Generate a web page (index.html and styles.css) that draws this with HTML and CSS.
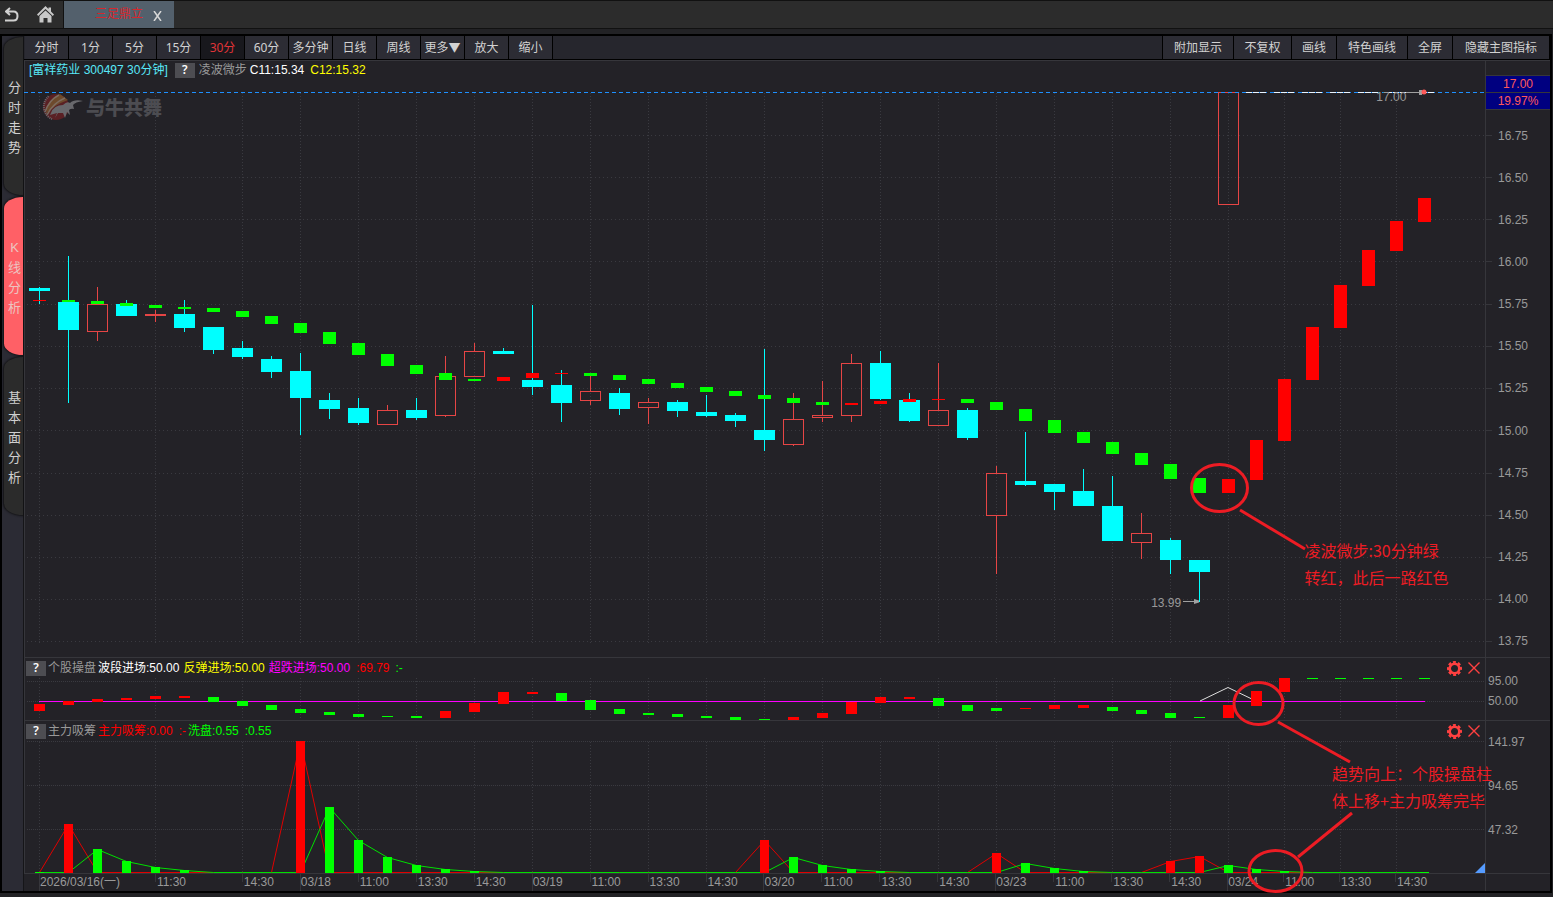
FILE: index.html
```html
<!DOCTYPE html>
<html lang="zh-CN">
<head>
<meta charset="utf-8">
<title>富祥药业 300497</title>
<link rel="stylesheet" href="styles.css">
</head>
<body>
<header class="topbar">
  <button class="nav-btn" aria-label="返回"><svg width="14" height="16" viewBox="0 0 14 16"><path d="M5 1 1 4.500 5 8M1.500 4.500H8.500Q12.500 4.500 12.500 9T8.500 13.500H0" fill="none" stroke="#d0d0d0" stroke-width="2"/></svg></button>
  <button class="nav-btn" aria-label="首页"><svg width="17" height="17" viewBox="0 0 17 17"><path d="M8.500 0 11.500 3V1.500H14V5.500L17 8.500 15.800 10 8.500 3 1.200 10 0 8.500Z" fill="#c8c8c8"/><path d="M8.500 4.500 14.500 10V16.500H10.500V12H6.500V16.500H2.500V10Z" fill="#c8c8c8"/></svg></button>
  <div class="doc-tab"><span class="doc-name">三足鼎立</span><button class="doc-close" aria-label="关闭标签"><svg width="9" height="10" viewBox="0 0 9 10"><path d="M1 0 8 10M8 0 1 10" stroke="#d8d8d8" stroke-width="1.500"/></svg></button></div>
</header>
<div class="app">
  <nav class="side">
    <button class="side-tab"><span>分时走势</span></button>
    <button class="side-tab active"><span>K线分析</span></button>
    <button class="side-tab"><span>基本面分析</span></button>
  </nav>
  <main class="work">
    <div class="toolbar">
      <button>分时</button><button>1分</button><button>5分</button><button>15分</button><button class="on">30分</button><button>60分</button><button>多分钟</button><button>日线</button><button>周线</button><button>更多▼</button><button>放大</button><button>缩小</button>
      <span class="fill"></span>
      <button class="w71 first">附加显示</button><button class="w58">不复权</button><button class="w45">画线</button><button class="w71">特色画线</button><button class="w45">全屏</button><button class="w97">隐藏主图指标</button>
    </div>
    <section class="pane main-pane">
      <div class="plot">
        <svg id="price" class="chart" viewBox="24 60 1462 597" preserveAspectRatio="none"></svg>
        <div class="info"><span class="cyan">[富祥药业 300497 30分钟]</span><button class="help">?</button><span class="dim">凌波微步</span><span class="white">C11:15.34</span><span class="yellow">C12:15.32</span></div>
        <div class="watermark"><svg width="42" height="30" viewBox="0 0 42 30"><circle cx="15" cy="15" r="13" fill="#5a2024"/><path d="M5 22Q6 7 19 2L27 8Q13 13 5 22Z" fill="#6d4a2c"/><path d="M4 20Q8 8 18 3M6 23Q12 11 24 6" stroke="#7d6c60" stroke-width="1.500" fill="none"/><path d="M10 21Q13 13 22 13Q26 9 29 11Q33 7 42 9Q34 10 32 13L33 17Q30 16 28 18L29 23L26 20L24 26L22 21L17 21L14 26L16 21L9 23Z" fill="#68686c"/><path d="M11 27A13.500 13.500 0 0 1 8 4" fill="none" stroke="#66666b" stroke-width="2" stroke-dasharray="1 1"/></svg><span>与牛共舞</span></div>
        <span class="mark low">13.99</span><span class="mark high">17.00</span>
      </div>
      <div class="axis">
        <div class="quote">17.00</div><div class="quote">19.97%</div>
        <div class="prices"><span>16.75</span><span>16.50</span><span>16.25</span><span>16.00</span><span>15.75</span><span>15.50</span><span>15.25</span><span>15.00</span><span>14.75</span><span>14.50</span><span>14.25</span><span>14.00</span><span>13.75</span></div>
      </div>
    </section>
    <section class="pane trade-pane">
      <div class="plot">
        <svg id="trade" class="chart" viewBox="24 658 1462 62" preserveAspectRatio="none"></svg>
        <div class="info sub"><button class="help">?</button><span class="dim">个股操盘</span><span class="white">波段进场:50.00</span><span class="yellow">反弹进场:50.00</span><span class="magenta">超跌进场:50.00</span><span class="red wide">:69.79</span><span class="green wide">:-</span><span class="fill"></span>
          <button class="icon" aria-label="设置"><svg width="15" height="15" viewBox="0 0 15 15"><circle cx="7.500" cy="7.500" r="4.800" fill="none" stroke="#ff4040" stroke-width="2.600"/><circle cx="7.500" cy="7.500" r="6.300" fill="none" stroke="#ff4040" stroke-width="2.400" stroke-dasharray="3 2" pathLength="40" transform="rotate(-14 7.500 7.500)"/></svg></button><button class="icon" aria-label="关闭"><svg width="12" height="12" viewBox="0 0 12 12"><path d="M.5 .5 11.500 11.500M11.500 .5 .5 11.500" stroke="#ff4040" stroke-width="1.400"/></svg></button></div>
      </div>
      <div class="axis levels tight"><span>95.00</span><span>50.00</span></div>
    </section>
    <section class="pane force-pane">
      <div class="plot">
        <svg id="force" class="chart" viewBox="24 721 1462 152" preserveAspectRatio="none"></svg>
        <div class="info sub"><button class="help">?</button><span class="dim">主力吸筹</span><span class="pure">主力吸筹:0.00</span><span class="pure wide">:-</span><span class="green">洗盘:0.55</span><span class="green wide">:0.55</span><span class="fill"></span>
          <button class="icon" aria-label="设置"><svg width="15" height="15" viewBox="0 0 15 15"><circle cx="7.500" cy="7.500" r="4.800" fill="none" stroke="#ff4040" stroke-width="2.600"/><circle cx="7.500" cy="7.500" r="6.300" fill="none" stroke="#ff4040" stroke-width="2.400" stroke-dasharray="3 2" pathLength="40" transform="rotate(-14 7.500 7.500)"/></svg></button><button class="icon" aria-label="关闭"><svg width="12" height="12" viewBox="0 0 12 12"><path d="M.5 .5 11.500 11.500M11.500 .5 .5 11.500" stroke="#ff4040" stroke-width="1.400"/></svg></button></div>
      </div>
      <div class="axis levels"><span>141.97</span><span>94.65</span><span>47.32</span></div>
    </section>
    <div class="dates"><div class="date-row" id="dates"></div><div class="axis"></div></div>
  </main>
</div>
<div class="notes">
  <svg class="note-lines" viewBox="0 0 1553 897" preserveAspectRatio="none"><g fill="none" stroke="#ed1c24" stroke-width="3"><ellipse cx="1219.500" cy="488" rx="28" ry="23.500"/><path d="M1240 510 1305 549"/><ellipse cx="1258.500" cy="703.500" rx="24.500" ry="21"/><path d="M1278 722 1350 762"/><ellipse cx="1275.500" cy="871" rx="26.500" ry="20.500"/><path d="M1298 857 1352 813"/></g></svg>
  <p class="note n1">凌波微步:30分钟绿<br>转红，此后一路红色</p>
  <p class="note n2">趋势向上：个股操盘柱<br>体上移+主力吸筹完毕</p>
</div>
<script src="chart.js"></script>
</body>
</html>
```

FILE: styles.css
```css
* { box-sizing: border-box; }
body {
  margin: 0; height: 100vh; position: relative; overflow: hidden;
  display: flex; flex-direction: column;
  background: #222225; color: #999;
  font: 12px/16px "Liberation Sans", "Noto Sans CJK SC", sans-serif;
}
button { border: 0; padding: 0; margin: 0; background: none; color: inherit; font: inherit; display: flex; align-items: center; justify-content: center; flex: none; }
svg { display: block; }
.fill { flex: 1; }

.topbar { display: flex; height: 28px; flex: none; background: #2c2c2c; border-top: 1px solid #111; box-shadow: 0 1px #111; }
.nav-btn { width: 28px; padding-right: 4px; }
.nav-btn + .nav-btn { width: 36px; padding-right: 0; border-right: 1px solid #111; }
.doc-tab { display: flex; align-items: center; width: 110px; padding: 0 12px 0 31px; background: #53606c; justify-content: space-between; }
.doc-name { color: #d8262c; line-height: 26px; padding-bottom: 2px; }
.doc-close { padding-top: 2px; }

.app { flex: 1; min-height: 0; display: flex; margin: 6px 1px 4px 0; border: 2px solid #000; }
.side { width: 22px; flex: none; display: flex; flex-direction: column; gap: 2px; padding: 1px 0 0 2px; background: #2b2b34; border-right: 1px solid #151518; }
.side-tab {
  min-height: 158px; padding: 4px 0 0 2px;
  background: #2b2b2b; color: #d0d0d0; border-radius: 20px 0 0 20px / 12px 0 0 12px;
  box-shadow: 0 0 2px 1px #121214; font-size: 13px; line-height: 20px;
}
.side-tab span { width: 14px; word-break: break-all; text-align: center; }
.side-tab.active { background: #ff6066; color: #ecc4c0; }

.work { flex: 1; min-width: 0; display: flex; flex-direction: column; background: #232227; }
.toolbar { display: flex; height: 24px; flex: none; padding-left: 1px; background: #26262d; border-bottom: 1px solid #000; font-family: "Noto Sans", "Noto Sans CJK SC", sans-serif; color: #d2d2d2; }
.toolbar button { width: 44px; background: #2c2c34; border-right: 1px solid #000; white-space: nowrap; }
.toolbar button.on { background: #18181d; color: #e03438; }
.toolbar button.first { border-left: 1px solid #000; }
.toolbar .w71 { width: 71px; }
.toolbar .w71.first { width: 72px; }
.toolbar .w58 { width: 58px; }
.toolbar .w45 { width: 45px; }
.toolbar .w97 { width: 97px; }

.pane { display: flex; border-top: 1px solid #36363b; flex: none; }
.main-pane { flex: 1; min-height: 0; border-top: 0; }
.trade-pane { height: 63px; }
.force-pane { height: 153px; }
.plot { flex: 1; min-width: 0; display: grid; position: relative; }
.plot > .chart, .plot > .info, .plot > .watermark { grid-area: 1 / 1; }
.chart { width: 100%; height: 100%; min-height: 0; overflow: visible; }
.axis { width: 64px; flex: none; position: relative; }

.info { display: flex; align-items: center; align-self: start; gap: 4px; height: 20px; padding-left: 5px; white-space: nowrap; z-index: 1; }
.info.sub { padding: 0 5px 0 2px; height: 20px; gap: 2px; }
.help { width: 20px; height: 15px; background: #4d4d52; color: #fff; font-family: "Noto Sans", sans-serif; font-weight: 600; }
.info:not(.sub) .help { margin-left: 3px; }
.info .dim { margin-right: -1px; }
.info.sub .dim { margin-right: 0; }
.info .yellow, .info .magenta { margin-left: 2px; }
.info .wide { margin-left: 4px; }
.icon { width: 15px; height: 15px; margin-left: 2px; }
.cyan { color: #58e8f8; } .dim { color: #999; } .white { color: #fff; } .yellow { color: #ff0; }
.magenta { color: #f0f; } .red, .pure { color: #f00; } .green { color: #0f0; }

.watermark { align-self: start; justify-self: start; display: flex; align-items: center; gap: 3px; margin: 32px 0 0 17px; color: #4c4c51; font: 900 19px/30px "Noto Sans CJK SC", sans-serif; }
.mark { position: absolute; color: #999; }
.mark.low { right: 20.850%; top: 89.600%; }
.mark.high { right: 5.450%; top: 4.850%; }

.main-pane .axis { display: flex; flex-direction: column; padding-top: 15px; }
.quote { height: 17px; flex: none; border-top: 1px solid #36363b; background: #000080; color: #ff5a5a; text-align: center; line-height: 16px; }
.prices { flex: 1; display: flex; flex-direction: column; justify-content: space-between; padding: 18px 0 8px 12px; border-top: 1px solid #36363b; }
.levels { display: flex; flex-direction: column; gap: 28px; padding: 13px 0 0 2px; }
.levels.tight { gap: 4px; padding-top: 15px; }

.dates { display: flex; height: 18px; flex: none; border-top: 1px solid #36363b; }
.date-row { flex: 1; display: grid; border-right: 1px solid #36363b; }
.date-row span { min-width: 0; padding-left: 2px; white-space: nowrap; color: #999; background: linear-gradient(#36363b, #36363b) 0 0 / 1px 8px no-repeat; }
.date-row .day { padding-left: 1px; background-size: 1px 100%; }
.date-row .blank { background: none; }

.notes { position: absolute; inset: 0; pointer-events: none; z-index: 2; }
.note-lines { width: 100%; height: 100%; }
.note { position: absolute; margin: 0; color: #ed1c24; font: 16px/27px "Noto Sans CJK SC", sans-serif; white-space: nowrap; }
.n1 { left: 84%; top: 59.880%; }
.n2 { left: 85.770%; top: 84.780%; }
```

FILE: chart.js
```js
// Shared bar centres: 42 bars at 29 units, the rest at 28.
const X = [];
for (let i = 0; i < 49; i++) X.push(i <= 41 ? 39 + 29 * i : 1228 + 28 * (i - 41));

// [kind, body top, body bottom, high, low]
const candles = [
  ['d',288,291,287,304],['d',302,330,256,403],['u',304,332,287,341],['d',304,316,300,316],['u',314,316,310,322],
  ['d',314,328,300,332],['d',327,350,327,354],['d',348,357,341,359],['d',359,372,356,378],['d',371,398,353,435],
  ['d',400,409,393,419],['d',408,423,398,425],['u',410,425,405,425],['d',410,418,398,420],['u',376,416,356,417],
  ['u',351,377,343,377],['d',351,354,348,354],['d',380,387,305,395],['d',385,403,370,422],['u',391,401,375,405],
  ['d',393,409,388,415],['u',402,408,398,424],['d',402,411,400,417],['d',412,416,395,417],['d',415,421,413,427],
  ['d',430,440,349,451],['u',419,445,393,446],['u',415,418,381,422],['u',363,416,354,422],['d',363,399,351,400],
  ['d',400,421,393,422],['u',410,426,363,426],['d',410,438,408,440],['u',473,516,466,574],['d',481,485,432,486],
  ['d',484,492,484,510],['d',491,506,469,506],['d',506,541,476,541],['u',533,543,513,559],['d',540,560,538,574],
  ['d',560,572,560,602],['u',92,205,92,205]
];
// [colour, top, bottom]
const steps = [
  ['r',300,301],['g',300,302],['g',301,304],['g',303,306],['g',305,308],['g',307,309],['g',308,312],['g',311,317],
  ['g',316,324],['g',323,333],['g',332,344],['g',343,355],['g',354,366],['g',365,374],['g',373,380],['g',379,381],
  ['r',377,381],['r',373,378],['r',373,374],['g',373,376],['g',375,380],['g',379,384],['g',383,388],['g',387,392],
  ['g',391,396],['g',395,399],['g',398,403],['g',402,405],['r',403,405],['r',401,404],['r',399,402],['r',399,400],
  ['g',399,403],['g',402,410],['g',409,421],['g',420,433],['g',432,443],['g',442,454],['g',453,465],['g',464,479],
  ['g',478,493],['r',479,493],['r',440,480],['r',379,441],['r',327,380],['r',285,328],['r',250,286],['r',221,251],['r',198,222]
];
const trades = [
  ['r',704,711],['r',701,705],['r',699,702],['r',698,700],['r',696,699],['r',696,698],['g',697,702],['g',701,706],
  ['g',705,710],['g',709,713],['g',712,715],['g',714,717],['g',716,717],['g',716,718],['r',711,718],['r',703,712],
  ['r',692,704],['r',692,694],['g',693,701],['g',700,710],['g',709,714],['g',713,715],['g',714,717],['g',716,718],
  ['g',717,720],['g',719,720],['r',717,720],['r',713,718],['r',702,714],['r',697,703],['r',697,699],['g',698,706],
  ['g',705,711],['g',708,711],['r',708,709],['r',705,709],['r',705,708],['g',707,711],['g',710,714],['g',713,718],
  ['g',717,718],['r',705,718],['r',691,706],['r',678,692],['g',678,679],['g',678,679],['g',678,679],['g',678,679],['g',678,679]
];
const buys = {1:824, 9:741, 25:840, 33:853, 39:861, 40:856};
const washes = {2:849,3:861,4:867,5:870,10:807,11:840,12:857,13:865,14:869,15:871,26:857,27:865,28:869,29:871,34:863,35:868,36:871,41:865,42:869,43:871};

const RED = '#ff0000', GREEN = '#00ff00', CYAN = '#00ffff', GRID = '#3a3a40';
const rect = (x, y, w, h, f) => `<rect x="${x}" y="${y}" width="${w}" height="${h}" fill="${f}"/>`;
const hline = (y, dash) => `<path d="M27 ${y + .5}H1485" stroke="${GRID}" stroke-dasharray="${dash}"/>`;
const columns = [39, 155, 242];
for (let x = 300; x <= 1228; x += 58) columns.push(x);
columns.push(1284, 1340, 1396);
const vlines = (a, b) => columns.map(x => `<path d="M${x + .5} ${a}V${b}" stroke="${GRID}" stroke-dasharray="1 2"/>`).join('');
const blocks = (list, w) => list.map((s, i) => rect(X[i] - (w - 1) / 2, s[1], w, s[2] - s[1], s[0] === 'r' ? RED : GREEN)).join('');
const edge = (a, b) => rect(1485, a, 1, b - a, '#36363b') + rect(24, a, 1, b - a, '#36363b');

let s = rect(24, 60, 1526, 1, '#36363b') + edge(60, 657);
[135,177,219,261,304,346,388,430,473,515,557,599,641].forEach(y => s += hline(y, '1 3') + rect(1486, y, 6, 1, '#36363b'));
s += vlines(93, 643);
candles.forEach(([k, t, b, hi, lo], i) => {
  const x = X[i];
  if (k === 'd') s += rect(x, hi, 1, lo - hi, CYAN) + rect(x - 10, t, 21, b - t, CYAN);
  else {
    const c = '#e64545';
    s += rect(x, hi, 1, t - hi, c) + rect(x, b, 1, lo - b, c);
    s += b - t < 3 ? rect(x - 10, t, 21, b - t, c) : `<rect x="${x - 9.5}" y="${t + .5}" width="20" height="${b - t - 1}" fill="none" stroke="${c}"/>`;
  }
});
s += `<path d="M24 92.5H1486" stroke="#1e90ff" stroke-dasharray="4 3"/>`;
for (let i = 42; i < 49; i++) s += `<path d="M${X[i] - 10} 92.5h21" stroke="#e8f4ff" stroke-dasharray="6 1"/>`;
s += blocks(steps, 13);
s += `<path d="M1183 601.5H1196M1406 92.5H1420" stroke="#a0a0a0"/><path d="M1194 599 1199 600.5V602.500L1194 604Z" fill="#a0a0a0"/><rect x="1419" y="90" width="3" height="5" fill="#a0a0a0"/><circle cx="1424" cy="92" r="2.500" fill="#ff5a5a"/>`;
document.getElementById('price').innerHTML = s;

s = edge(658, 720) + hline(681, '1 1') + hline(701, '1 1') + vlines(678, 719);
s += rect(39, 701, 1386, 1, '#ff00ff') + '<path d="M1200 701 1228 687.500 1256 701" fill="none" stroke="#ddd"/>' + blocks(trades, 11);
document.getElementById('trade').innerHTML = s;

s = edge(721, 873) + hline(741, '1 1') + hline(785, '1 1') + hline(829, '1 1') + vlines(742, 873);
const trace = (v, c) => `<polyline points="${X.map((x, i) => `${x + .5},${(v[i] || 872) + .5}`).join(' ')}" fill="none" stroke="${c}"/>`;
s += trace(buys, '#e00000') + trace(washes, '#00e000');
s += rect(35, 872, 9, 1, GREEN) + rect(1420, 872, 9, 1, GREEN);
for (const i in buys) s += rect(X[i] - 4, buys[i], 9, 873 - buys[i], RED);
for (const i in washes) s += rect(X[i] - 4, washes[i], 9, 873 - washes[i], GREEN);
s += '<path d="M1485 863V873H1475Z" fill="#559bff"/>';
document.getElementById('force').innerHTML = s;

const labels = ['2026/03/16(一)', '11:30', '14:30'];
['03/18', '03/19', '03/20', '03/23'].forEach(d => labels.push(d, '11:00', '13:30', '14:30'));
labels.push('03/24', '11:00', '13:30', '14:30');
const row = document.getElementById('dates');
const stops = [24, ...columns, 1486];
row.style.gridTemplateColumns = stops.slice(1).map((x, i) => `${x - stops[i]}fr`).join(' ');
row.innerHTML = '<span class="blank"></span>' + labels.map(t => `<span class="${t.includes('/') ? 'day' : 'time'}">${t}</span>`).join('');
```
